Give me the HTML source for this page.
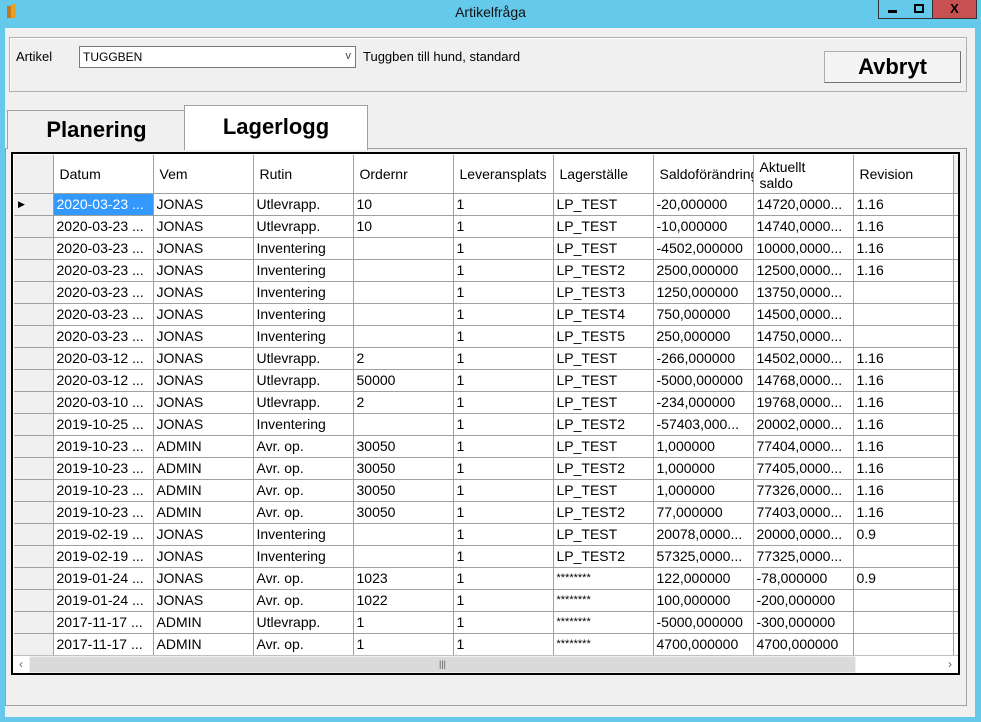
<!DOCTYPE html>
<html><head><meta charset="utf-8"><style>
*{margin:0;padding:0;box-sizing:border-box}
body{width:981px;height:722px;background:#64c9ea;position:relative;overflow:hidden;font-family:"Liberation Sans",Arial,sans-serif;color:#000}
.a{position:absolute}
#win{left:5px;top:28px;width:970px;height:689px;background:#f0f0f0}
.title{left:0;top:4px;width:981px;text-align:center;font-size:14px;color:#111}
.wb{top:0;height:19px;border:1px solid #333;border-top:none;background:#64c9ea}
table{border-collapse:collapse;table-layout:fixed;font-size:14px}
td{border-right:1px solid #a0a0a0;border-bottom:1px solid #a0a0a0;height:22px;padding:0 0 0 3px;white-space:nowrap;overflow:hidden;background:#fff;vertical-align:middle;line-height:20px}
td.h{background:#f0f0f0}
tr.hd td{background:#fff;height:38px;padding-left:6px;vertical-align:middle;line-height:16px}
tr.hd td.h{background:#f0f0f0}
td.sel{background:#3399ff;color:#fff}
</style></head><body>
<div class="a" style="left:7px;top:6px;width:4px;height:12px;background:#c8741c"></div>
<div class="a" style="left:11px;top:4px;width:5px;height:14px;background:#e8a020"></div>
<div class="a title">Artikelfråga</div>
<div class="a wb" style="left:878px;width:28px;"><div class="a" style="left:9px;top:10px;width:9px;height:3px;background:#000"></div></div>
<div class="a wb" style="left:905px;width:28px;border-left:none;"><div class="a" style="left:9px;top:4px;width:10px;height:9px;border:2px solid #000"></div></div>
<div class="a wb" style="left:933px;width:44px;background:#c75050;border-left:none;text-align:center;font-weight:bold;font-size:13px;line-height:18px">X</div>
<div id="win" class="a"></div>
<div class="a" style="left:9px;top:37px;width:958px;height:55px;border:1px solid #b0b0b0;box-shadow:inset 1px 1px #fff"></div>
<div class="a" style="left:16px;top:49px;font-size:13px">Artikel</div>
<div class="a" style="left:79px;top:46px;width:277px;height:22px;background:#fff;border:1px solid #7a7a7a;font-size:12px;padding:3px 0 0 3px">TUGGBEN<span class="a" style="right:4px;top:3px;font-size:11px;color:#444">v</span></div>
<div class="a" style="left:363px;top:49px;font-size:13px">Tuggben till hund, standard</div>
<div class="a" style="left:824px;top:51px;width:137px;height:32px;border:1px solid #adadad;border-right-color:#707070;border-bottom-color:#707070;background:#f4f4f4;font-size:22px;font-weight:bold;text-align:center;line-height:30px">Avbryt</div>
<div class="a" style="left:5px;top:148px;width:962px;height:558px;border:1px solid #a0a0a0;background:#f0f0f0"></div>
<div class="a" style="left:7px;top:110px;width:179px;height:39px;border:1px solid #a0a0a0;border-bottom:none;background:#f0f0f0;font-size:22px;font-weight:bold;text-align:center;line-height:38px">Planering</div>
<div class="a" style="left:184px;top:105px;width:184px;height:45px;border:1px solid #a0a0a0;border-bottom:none;background:#fff;font-size:22px;font-weight:bold;text-align:center;line-height:42px">Lagerlogg</div>
<div class="a" style="left:11px;top:152px;width:949px;height:523px;border:2px solid #000;background:#fff;overflow:hidden">
<table style="width:960px;position:absolute;left:1px;top:1px">
<colgroup><col style="width:39px"><col style="width:100px"><col style="width:100px"><col style="width:100px"><col style="width:100px"><col style="width:100px"><col style="width:100px"><col style="width:100px"><col style="width:100px"><col style="width:100px"><col style="width:21px"></colgroup>
<tr class="hd"><td class="h"></td><td>Datum</td><td>Vem</td><td>Rutin</td><td>Ordernr</td><td>Leveransplats</td><td>Lagerställe</td><td>Saldoförändring</td><td style="padding-top:2px">Aktuellt<br>saldo</td><td>Revision</td><td class="h"></td></tr>
<tr><td class="h" style="font-size:9px;padding-left:4px">&#9654;</td><td class="sel">2020-03-23 ...</td><td>JONAS</td><td>Utlevrapp.</td><td>10</td><td>1</td><td>LP_TEST</td><td>-20,000000</td><td>14720,0000...</td><td>1.16</td><td></td></tr>
<tr><td class="h"></td><td>2020-03-23 ...</td><td>JONAS</td><td>Utlevrapp.</td><td>10</td><td>1</td><td>LP_TEST</td><td>-10,000000</td><td>14740,0000...</td><td>1.16</td><td></td></tr>
<tr><td class="h"></td><td>2020-03-23 ...</td><td>JONAS</td><td>Inventering</td><td></td><td>1</td><td>LP_TEST</td><td>-4502,000000</td><td>10000,0000...</td><td>1.16</td><td></td></tr>
<tr><td class="h"></td><td>2020-03-23 ...</td><td>JONAS</td><td>Inventering</td><td></td><td>1</td><td>LP_TEST2</td><td>2500,000000</td><td>12500,0000...</td><td>1.16</td><td></td></tr>
<tr><td class="h"></td><td>2020-03-23 ...</td><td>JONAS</td><td>Inventering</td><td></td><td>1</td><td>LP_TEST3</td><td>1250,000000</td><td>13750,0000...</td><td></td><td></td></tr>
<tr><td class="h"></td><td>2020-03-23 ...</td><td>JONAS</td><td>Inventering</td><td></td><td>1</td><td>LP_TEST4</td><td>750,000000</td><td>14500,0000...</td><td></td><td></td></tr>
<tr><td class="h"></td><td>2020-03-23 ...</td><td>JONAS</td><td>Inventering</td><td></td><td>1</td><td>LP_TEST5</td><td>250,000000</td><td>14750,0000...</td><td></td><td></td></tr>
<tr><td class="h"></td><td>2020-03-12 ...</td><td>JONAS</td><td>Utlevrapp.</td><td>2</td><td>1</td><td>LP_TEST</td><td>-266,000000</td><td>14502,0000...</td><td>1.16</td><td></td></tr>
<tr><td class="h"></td><td>2020-03-12 ...</td><td>JONAS</td><td>Utlevrapp.</td><td>50000</td><td>1</td><td>LP_TEST</td><td>-5000,000000</td><td>14768,0000...</td><td>1.16</td><td></td></tr>
<tr><td class="h"></td><td>2020-03-10 ...</td><td>JONAS</td><td>Utlevrapp.</td><td>2</td><td>1</td><td>LP_TEST</td><td>-234,000000</td><td>19768,0000...</td><td>1.16</td><td></td></tr>
<tr><td class="h"></td><td>2019-10-25 ...</td><td>JONAS</td><td>Inventering</td><td></td><td>1</td><td>LP_TEST2</td><td>-57403,000...</td><td>20002,0000...</td><td>1.16</td><td></td></tr>
<tr><td class="h"></td><td>2019-10-23 ...</td><td>ADMIN</td><td>Avr. op.</td><td>30050</td><td>1</td><td>LP_TEST</td><td>1,000000</td><td>77404,0000...</td><td>1.16</td><td></td></tr>
<tr><td class="h"></td><td>2019-10-23 ...</td><td>ADMIN</td><td>Avr. op.</td><td>30050</td><td>1</td><td>LP_TEST2</td><td>1,000000</td><td>77405,0000...</td><td>1.16</td><td></td></tr>
<tr><td class="h"></td><td>2019-10-23 ...</td><td>ADMIN</td><td>Avr. op.</td><td>30050</td><td>1</td><td>LP_TEST</td><td>1,000000</td><td>77326,0000...</td><td>1.16</td><td></td></tr>
<tr><td class="h"></td><td>2019-10-23 ...</td><td>ADMIN</td><td>Avr. op.</td><td>30050</td><td>1</td><td>LP_TEST2</td><td>77,000000</td><td>77403,0000...</td><td>1.16</td><td></td></tr>
<tr><td class="h"></td><td>2019-02-19 ...</td><td>JONAS</td><td>Inventering</td><td></td><td>1</td><td>LP_TEST</td><td>20078,0000...</td><td>20000,0000...</td><td>0.9</td><td></td></tr>
<tr><td class="h"></td><td>2019-02-19 ...</td><td>JONAS</td><td>Inventering</td><td></td><td>1</td><td>LP_TEST2</td><td>57325,0000...</td><td>77325,0000...</td><td></td><td></td></tr>
<tr><td class="h"></td><td>2019-01-24 ...</td><td>JONAS</td><td>Avr. op.</td><td>1023</td><td>1</td><td style="font-size:11px">********</td><td>122,000000</td><td>-78,000000</td><td>0.9</td><td></td></tr>
<tr><td class="h"></td><td>2019-01-24 ...</td><td>JONAS</td><td>Avr. op.</td><td>1022</td><td>1</td><td style="font-size:11px">********</td><td>100,000000</td><td>-200,000000</td><td></td><td></td></tr>
<tr><td class="h"></td><td>2017-11-17 ...</td><td>ADMIN</td><td>Utlevrapp.</td><td>1</td><td>1</td><td style="font-size:11px">********</td><td>-5000,000000</td><td>-300,000000</td><td></td><td></td></tr>
<tr><td class="h"></td><td>2017-11-17 ...</td><td>ADMIN</td><td>Avr. op.</td><td>1</td><td>1</td><td style="font-size:11px">********</td><td>4700,000000</td><td>4700,000000</td><td></td><td></td></tr>
</table>
<div class="a" style="left:0;bottom:0;width:945px;height:18px;background:#f0f0f0;border-top:1px solid #c0c0c0">
<div class="a" style="left:0;top:0;width:16px;height:17px;background:#fff;font-size:12px;color:#666;text-align:center;line-height:16px">&lsaquo;</div>
<div class="a" style="left:17px;top:1px;width:825px;height:15px;background:#dadada;font-size:9px;color:#555;text-align:center;line-height:15px">|||</div>
<div class="a" style="right:0;top:0;width:16px;height:17px;background:#fff;font-size:12px;color:#666;text-align:center;line-height:16px">&rsaquo;</div>
<div class="a" style="left:843px;top:0;width:86px;height:17px;background:#fff"></div>
</div>
</div>
</body></html>
